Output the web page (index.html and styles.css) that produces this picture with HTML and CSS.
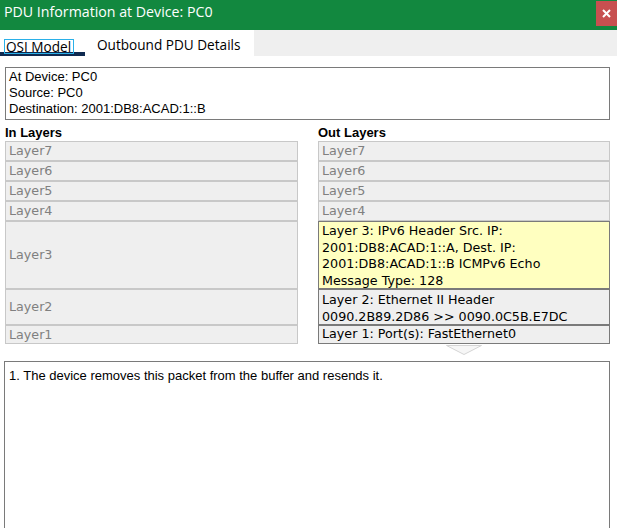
FILE: index.html
```html
<!DOCTYPE html>
<html>
<head>
<meta charset="utf-8">
<link rel="stylesheet" href="styles.css">
</head>
<body>
<div class="window">
  <div class="titlebar">
    <span class="title">PDU Information at Device: PC0</span>
    <div class="close">
      <svg width="9" height="9" viewBox="0 0 9 9"><path d="M1 1 L8 8 M8 1 L1 8" stroke="#fff" stroke-width="2"/></svg>
    </div>
  </div>
  <div class="tabs">
    <div class="tab active"><span class="focus">OSI Model</span></div>
    <div class="tab">Outbound PDU Details</div>
  </div>
  <div class="content">
    <div class="info">
      <div>At Device: PC0</div>
      <div>Source: PC0</div>
      <div>Destination: 2001:DB8:ACAD:1::B</div>
    </div>
    <div class="layers">
      <div class="col">
        <div class="heading">In Layers</div>
        <div class="cell">Layer7</div>
        <div class="cell">Layer6</div>
        <div class="cell">Layer5</div>
        <div class="cell">Layer4</div>
        <div class="cell l3">Layer3</div>
        <div class="cell l2">Layer2</div>
        <div class="cell l1">Layer1</div>
      </div>
      <div class="col">
        <div class="heading">Out Layers</div>
        <div class="cell">Layer7</div>
        <div class="cell">Layer6</div>
        <div class="cell">Layer5</div>
        <div class="cell">Layer4</div>
        <div class="cell l3 on yellow">Layer 3: IPv6 Header Src. IP:<br>2001:DB8:ACAD:1::A, Dest. IP:<br>2001:DB8:ACAD:1::B ICMPv6 Echo<br>Message Type: 128</div>
        <div class="cell l2 on">Layer 2: Ethernet II Header<br>0090.2B89.2D86 &gt;&gt; 0090.0C5B.E7DC</div>
        <div class="cell l1 on">Layer 1: Port(s): FastEthernet0</div>
        <div class="arrow">
          <svg width="36" height="10" viewBox="0 0 36 10"><polygon points="0.5,0.5 35.5,0.5 18,9.5" fill="#f6f6f6" stroke="#d4d4d4"/></svg>
        </div>
      </div>
    </div>
    <div class="desc">1. The device removes this packet from the buffer and resends it.</div>
  </div>
</div>
</body>
</html>
```
FILE: styles.css
```css
html, body {
  margin: 0;
  padding: 0;
  background: #fff;
}
.window {
  width: 617px;
  height: 528px;
  overflow: hidden;
  background: #fff;
}
.titlebar {
  height: 30px;
  background: #12883f;
  display: flex;
  align-items: flex-start;
}
.title {
  color: #fff;
  font-family: "Open Sans", "Noto Sans", sans-serif;
  font-size: 14.2px;
  line-height: 24px;
  padding-left: 4px;
}
.close {
  margin-left: auto;
  margin-top: 1px;
  width: 21px;
  height: 25px;
  background: #c75050;
  display: flex;
  align-items: center;
  justify-content: center;
}
.tabs {
  height: 26px;
  background: #efefef;
  display: flex;
}
.tab {
  background: #fff;
  font-family: "Open Sans", "Noto Sans", sans-serif;
  font-size: 13.6px;
  color: #000;
  height: 26px;
  box-sizing: border-box;
  padding: 5px 13px 0 12px;
}
.tab.active {
  width: 85px;
  padding: 7px 0 0 5px;
  border-bottom: 4px solid #0f2a50;
}
.focus {
  outline: 1px solid #2ab0e8;
  padding: 0 2px 0 1px;
  line-height: 13px;
  display: inline-block;
}
.content {
  padding: 11px 7px 0 4px;
}
.info {
  border: 1px solid #7a7a7a;
  margin-left: 1px;
  padding: 1px 4px 1px 3px;
  height: 49px;
  box-sizing: content-box;
  font-family: "Liberation Sans", Arial, sans-serif;
  font-size: 13px;
  line-height: 16px;
  color: #000;
}
.layers {
  display: grid;
  grid-template-columns: 293px 292px;
  column-gap: 20px;
  margin-top: 5px;
  margin-left: 1px;
}
.heading {
  font-family: "Liberation Sans", Arial, sans-serif;
  font-weight: bold;
  font-size: 13px;
  line-height: 16px;
  height: 16px;
  color: #000;
}
.cell {
  border: 1px solid #c8c8c8;
  background: #efefef;
  height: 18px;
  box-sizing: content-box;
  font-family: "DejaVu Sans", Verdana, sans-serif;
  font-size: 12.7px;
  line-height: 18px;
  color: #808080;
  padding-left: 3px;
  display: flex;
  align-items: center;
  white-space: nowrap;
}
.cell.l3 { height: 66px; }
.cell.l2 { height: 34px; }
.cell.l1 { height: 17px; }
.cell.on {
  border-color: #7a7a7a;
  color: #000;
  display: block;
  line-height: 16.5px;
}
.cell.on.l3 {
  padding-top: 1px;
  height: 65px;
}
.cell.on.l2 {
  line-height: 17px;
  padding-top: 1px;
  height: 33px;
}
.cell.on.yellow {
  background: #ffffc0;
}
.arrow {
  display: flex;
  justify-content: center;
  height: 10px;
  margin-top: 1px;
}
.arrow svg { display: block; }
.desc {
  border: 1px solid #7a7a7a;
  margin-top: 6px;
  height: 200px;
  padding: 6px 4px;
  font-family: "Liberation Sans", Arial, sans-serif;
  font-size: 13px;
  color: #000;
}
```
